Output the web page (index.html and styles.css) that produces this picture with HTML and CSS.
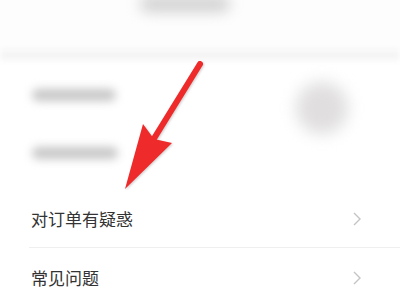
FILE: index.html
```html
<!DOCTYPE html>
<html lang="zh">
<head>
<meta charset="utf-8">
<link rel="stylesheet" href="styles.css">
</head>
<body>
<div class="page">
  <div class="top">
    <div class="top-blob"></div>
  </div>
  <div class="band"></div>
  <div class="info">
    <div class="info-lines">
      <div class="blur-line"></div>
      <div class="blur-line"></div>
    </div>
    <div class="blur-circle"></div>
  </div>
  <div class="row">
    <span class="row-text">对订单有疑惑</span>
    <svg class="chev" width="8" height="14" viewBox="0 0 8 14"><path d="M1 1 L7 7 L1 13" fill="none" stroke="#c4c4c4" stroke-width="1.4"/></svg>
  </div>
  <div class="row row-last">
    <span class="row-text">常见问题</span>
    <svg class="chev" width="8" height="14" viewBox="0 0 8 14"><path d="M1 1 L7 7 L1 13" fill="none" stroke="#c4c4c4" stroke-width="1.4"/></svg>
  </div>
  <svg class="arrow" width="400" height="300" viewBox="0 0 400 300">
    <line x1="200" y1="64" x2="150" y2="145" stroke="#ef2a2a" stroke-width="6" stroke-linecap="round"/>
    <polygon points="143,124 154,139 172,143 125,189" fill="#ef2a2a"/>
  </svg>
</div>
</body>
</html>
```

FILE: styles.css
```css
html, body {
  margin: 0;
  padding: 0;
  background: #ffffff;
}
.page {
  position: relative;
  width: 400px;
  height: 300px;
  overflow: hidden;
  font-family: "Noto Sans CJK SC", "Noto Sans", sans-serif;
}
.top {
  height: 50px;
  display: flex;
  justify-content: center;
  background: #fdfdfd;
}
.top-blob {
  width: 90px;
  height: 16px;
  margin-top: -4px;
  margin-left: -30px;
  background: #d0d0d0;
  border-radius: 8px;
  filter: blur(7px);
}
.band {
  height: 10px;
  background: #f4f4f4;
  filter: blur(3px);
}
.info {
  height: 130px;
  display: flex;
  align-items: flex-start;
  justify-content: space-between;
  padding: 0 52px 0 32px;
}
.info-lines {
  display: flex;
  flex-direction: column;
  gap: 46px;
  padding-top: 29px;
}
.blur-line {
  width: 84px;
  height: 12px;
  background: #c6c6c6;
  border-radius: 6px;
  filter: blur(5px);
}
.blur-line + .blur-line {
  width: 86px;
}
.blur-circle {
  width: 52px;
  height: 52px;
  margin-top: 22px;
  border-radius: 50%;
  background: #e0dede;
  filter: blur(8px);
}
.row {
  height: 58px;
  margin-left: 29px;
  padding-right: 39px;
  display: flex;
  align-items: center;
  justify-content: space-between;
  border-bottom: 1px solid #efefef;
  box-sizing: border-box;
}
.row-last {
  border-bottom: none;
  height: 60px;
}
.row-text {
  font-size: 17px;
  color: #333333;
  padding-left: 2px;
  margin-top: -1px;
}
.chev {
  display: block;
}
.arrow {
  position: absolute;
  left: 0;
  top: 0;
  filter: drop-shadow(1px 1px 1px rgba(60,60,60,0.25));
}
```
